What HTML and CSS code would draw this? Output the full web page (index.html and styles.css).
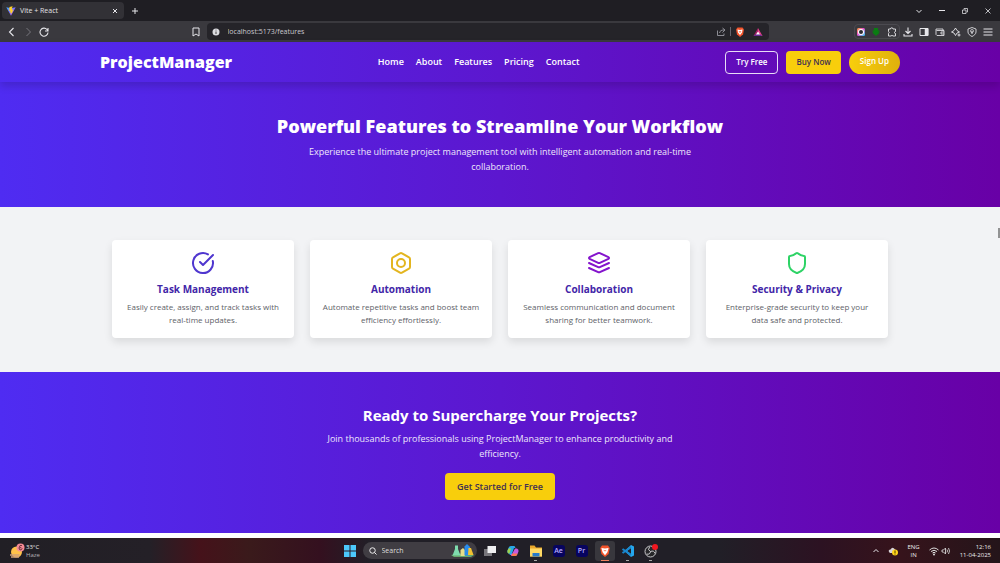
FILE: index.html
```html
<!DOCTYPE html>
<html lang="en">
<head>
<meta charset="utf-8">
<meta name="viewport" content="width=device-width, initial-scale=1">
<title>Vite + React</title>
<link rel="stylesheet" href="styles.css">
</head>
<body class="screen">
<div class="tabstrip">
  <div class="tab">
    <svg class="ico-10" viewBox="0 0 32 32"><defs><linearGradient id="vt" x1="0" y1="0" x2="1" y2="1"><stop offset="0" stop-color="#41b0ff"/><stop offset="1" stop-color="#bd34fe"/></linearGradient></defs><path d="M1 4l14 3 16-3-15 27z" fill="url(#vt)"/><path d="M21 1l-10 2-1 13 4-1-1 7 3-1-1 7 9-15-4 1 2-5-4 1z" fill="#ffd028"/></svg>
    <span class="tab-title">Vite + React</span>
    <button class="chrome-btn" aria-label="Close tab"><svg class="ico-6" viewBox="0 0 12 12"><path d="M2 2l8 8M10 2l-8 8" stroke-width="2"/></svg></button>
  </div>
  <button class="chrome-btn" aria-label="New tab"><svg class="ico-6" viewBox="0 0 12 12"><path d="M6 0v12M0 6h12" stroke-width="2"/></svg></button>
  <div class="window-controls">
    <button class="chrome-btn" aria-label="Search tabs"><svg class="ico-6" viewBox="0 0 12 12"><path d="M1 4l5 5 5-5" stroke-width="2"/></svg></button>
    <button class="chrome-btn" aria-label="Minimize"><svg class="ico-6" viewBox="0 0 12 12"><path d="M0 5h12" stroke-width="2"/></svg></button>
    <button class="chrome-btn" aria-label="Restore"><svg class="ico-6" viewBox="0 0 12 12"><path d="M1 4h7v7H1zM4 3V1h7v7H9" stroke-width="1.5"/></svg></button>
    <button class="chrome-btn" aria-label="Close window"><svg class="ico-6" viewBox="0 0 12 12"><path d="M1 1l10 10M11 1L1 11" stroke-width="1.6"/></svg></button>
  </div>
</div>
<div class="toolbar">
  <div class="nav-buttons">
    <button class="chrome-btn" aria-label="Back"><svg class="ico-10" viewBox="0 0 20 20"><path d="M13 2l-8 8 8 8" stroke-width="2.2"/></svg></button>
    <button class="chrome-btn dim" aria-label="Forward"><svg class="ico-10" viewBox="0 0 20 20"><path d="M7 2l8 8-8 8" stroke-width="2"/></svg></button>
    <button class="chrome-btn" aria-label="Reload"><svg class="ico-10" viewBox="0 0 20 20"><path d="M18 11a8 8 0 1 1-2-6l2 3M18 2v6h-6" stroke-width="2.2"/></svg></button>
  </div>
  <button class="chrome-btn bookmark" aria-label="Bookmark"><svg class="ico-10" viewBox="0 0 20 20"><path d="M4 2h12v16l-6-4-6 4z" stroke-width="2"/></svg></button>
  <div class="address">
    <svg class="ico-8" viewBox="0 0 16 16"><circle cx="8" cy="8" r="7" fill="#dcdce0"/><path d="M8 7v5" stroke="#444" stroke-width="2"/><circle cx="8" cy="4" r="1" fill="#444"/></svg>
    <input class="url" type="text" aria-label="Address" value="localhost:5173/features">
    <svg class="ico-10" viewBox="0 0 20 20"><path d="M3 7v10h13v-4M7 12c1-5 4-6 10-6M13 2l5 4-5 5" stroke="#9998a0" stroke-width="1.8"/></svg>
    <span class="divider"></span>
    <svg class="ico-10" viewBox="0 0 20 20"><path d="M5 1h10l3 4-2 10-6 5-6-5L2 5z" fill="#f2532a"/><path d="M5 5l5 1 5-1-1 6-4 5-4-5z" fill="#fff"/><path d="M7 8l3 1 3-1-3 4z" fill="#f2532a"/></svg>
    <svg class="ico-10 bat" viewBox="0 0 20 20"><path d="M10 2L1 18h9z" fill="#9e1f63"/><path d="M10 2l9 16h-9z" fill="#e8408c"/><path d="M1 18h18l-9-6z" fill="#662d91"/><path d="M10 9l4 6H6z" fill="#fff"/></svg>
  </div>
  <div class="toolbar-right">
    <div class="extensions">
      <svg class="ico-8" viewBox="0 0 16 16"><defs><linearGradient id="rb" x1="0" x2="1" y1="0" y2="1"><stop offset="0" stop-color="#ffa52e"/><stop offset=".45" stop-color="#e850d0"/><stop offset="1" stop-color="#26d7ef"/></linearGradient></defs><rect width="16" height="16" rx="3" fill="url(#rb)"/><circle cx="8" cy="8" r="6" fill="#fff"/><circle cx="8" cy="8" r="4" fill="#2c2b30"/></svg>
      <svg class="ico-8" viewBox="0 0 16 16"><path d="M4 0h8v5h4l-3 4h3l-8 7-8-7h3L0 5h4z" fill="#0a7d12"/></svg>
      <button class="chrome-btn" aria-label="Extensions"><svg class="ico-10" viewBox="0 0 20 20"><path d="M3 4h4a2.5 2.5 0 0 1 5 0h5v5a2 2 0 0 0 0 4v5h-5a2.500 2.500 0 0 0-4 0H3v-5a2.500 2.500 0 0 0 0-4z" stroke-width="1.8"/></svg></button>
    </div>
    <button class="chrome-btn" aria-label="Downloads"><svg class="ico-10" viewBox="0 0 20 20"><path d="M10 1v12M5 8l5 5 5-5M2 14v4h16v-4" stroke-width="2.2"/></svg></button>
    <button class="chrome-btn" aria-label="Sidebar"><svg class="ico-10" viewBox="0 0 20 20"><path d="M2 3h16v14H2z" stroke-width="2"/><path d="M12 3h6v14h-6z" fill="#e6e6ea"/></svg></button>
    <button class="chrome-btn" aria-label="Wallet"><svg class="ico-10" viewBox="0 0 20 20"><path d="M2 4h14v3M2 4v11l2 2h14V7H3M18 10h-6v4h6" stroke-width="1.700"/></svg></button>
    <button class="chrome-btn" aria-label="Assistant"><svg class="ico-10" viewBox="0 0 20 20"><path d="M9 2l3 5 5 3-5 2-3 5-3-5-5-2 5-3zM16 13v6M13 16h6" stroke-width="1.800"/></svg></button>
    <button class="chrome-btn" aria-label="VPN"><svg class="ico-10" viewBox="0 0 20 20"><path d="M10 1l8 3v6c0 4-4 7-8 9-4-2-8-5-8-9V4z" stroke-width="1.700"/><circle cx="10" cy="8" r="3" stroke="#d4d4d8" stroke-width="1.500"/><path d="M10 8v6" stroke-width="2"/></svg></button>
    <button class="chrome-btn" aria-label="Menu"><svg class="ico-10" viewBox="0 0 20 20"><path d="M1 4h18M1 10h18M1 16h18" stroke-width="2"/></svg></button>
  </div>
</div>

<div class="site">
  <header class="header">
    <div class="header-inner">
      <a class="brand" href="#">ProjectManager</a>
      <nav class="menu">
        <a href="#">Home</a><a href="#">About</a><a href="#">Features</a><a href="#">Pricing</a><a href="#">Contact</a>
      </nav>
      <div class="actions">
        <button class="btn btn-outline">Try Free</button>
        <button class="btn btn-yellow">Buy Now</button>
        <button class="btn btn-pill">Sign Up</button>
      </div>
    </div>
  </header>
  <main>
    <section class="hero">
      <h1 class="hero-title">Powerful Features to Streamline Your Workflow</h1>
      <p class="lead">Experience the ultimate project management tool with intelligent automation and real-time collaboration.</p>
    </section>
    <section class="features">
      <article class="card">
        <svg class="card-icon indigo" viewBox="0 0 24 24"><path d="M21.800 10A10 10 0 1 1 17 3.340"/><path d="M9 11l3 3L22 4"/></svg>
        <h2 class="card-title">Task Management</h2>
        <p class="card-text">Easily create, assign, and track tasks with real-time updates.</p>
      </article>
      <article class="card">
        <svg class="card-icon amber" viewBox="0 0 24 24"><path d="M21 16V8a2 2 0 0 0-1-1.730l-7-4a2 2 0 0 0-2 0l-7 4A2 2 0 0 0 3 8v8a2 2 0 0 0 1 1.730l7 4a2 2 0 0 0 2 0l7-4A2 2 0 0 0 21 16z"/><circle cx="12" cy="12" r="4"/></svg>
        <h2 class="card-title">Automation</h2>
        <p class="card-text">Automate repetitive tasks and boost team efficiency effortlessly.</p>
      </article>
      <article class="card">
        <svg class="card-icon purple" viewBox="0 0 24 24"><path d="M12.830 2.180a2 2 0 0 0-1.660 0L2.600 6.080a1 1 0 0 0 0 1.830l8.580 3.910a2 2 0 0 0 1.660 0l8.580-3.900a1 1 0 0 0 0-1.830z"/><path d="M2 12l9.170 4.160a2 2 0 0 0 1.660 0L22 12M2 17l9.170 4.160a2 2 0 0 0 1.660 0L22 17"/></svg>
        <h2 class="card-title">Collaboration</h2>
        <p class="card-text">Seamless communication and document sharing for better teamwork.</p>
      </article>
      <article class="card">
        <svg class="card-icon green" viewBox="0 0 24 24"><path d="M20 13c0 5-3.500 7.500-7.660 8.950a1 1 0 0 1-.67-.01C7.500 20.500 4 18 4 13V6a1 1 0 0 1 1-1c2 0 4.500-1.200 6.240-2.720a1.170 1.170 0 0 1 1.520 0C14.510 3.810 17 5 19 5a1 1 0 0 1 1 1z"/></svg>
        <h2 class="card-title">Security &amp; Privacy</h2>
        <p class="card-text">Enterprise-grade security to keep your data safe and protected.</p>
      </article>
    </section>
    <section class="cta">
      <h2 class="cta-title">Ready to Supercharge Your Projects?</h2>
      <p class="lead cta-lead">Join thousands of professionals using ProjectManager to enhance productivity and efficiency.</p>
      <button class="btn btn-cta">Get Started for Free</button>
    </section>
  </main>
  <svg class="cursor" viewBox="0 0 2 10"><path d="M1 0v10" stroke="#333" stroke-width="1"/></svg>
</div>

<footer class="taskbar">
  <div class="weather">
    <svg class="ico-16" viewBox="0 0 32 32"><circle cx="15" cy="18" r="11" fill="#ffc24a"/><path d="M2 24h19M4 28h16" stroke="#cfa079" stroke-width="3"/><circle cx="23" cy="9" r="8" fill="#f58a95"/><path d="M26 5h-4l-2 5 1 3 3 1 2-3-2-2-3 1" stroke="#4b1c28" stroke-width="1.500"/></svg>
    <div class="stack"><span>33°C</span><span class="muted">Haze</span></div>
  </div>
  <div class="apps">
    <button class="app" aria-label="Start"><svg class="ico-12" viewBox="0 0 24 24"><path d="M0 0h11v11H0zM13 0h11v11H13zM0 13h11v11H0zM13 13h11v11H13z" fill="#4cc8fb"/></svg></button>
    <label class="search">
      <svg class="ico-8" viewBox="0 0 16 16"><circle cx="7" cy="7" r="5.500" stroke="#eee" stroke-width="2"/><path d="M11 11l4 4" stroke="#eee" stroke-width="2"/></svg>
      <input class="search-input" type="search" placeholder="Search" aria-label="Search">
      <svg class="search-art" viewBox="0 0 46 26"><path d="M0 22q22-6 46 0l-6 4H6z" fill="#67a96b"/><path d="M8 3h6v7l5 13H3l5-13z" fill="#7fdcae"/><path d="M19 12l5-4 4 4v12h-9z" fill="#e6dd88"/><path d="M27 5l5-5 6 6v17H27z" fill="#298bea"/><path d="M35 8h5l5 14H34z" fill="#f2c232"/></svg>
    </label>
    <button class="app" aria-label="Task view"><svg class="ico-12" viewBox="0 0 24 24"><path d="M0 8h16v14H0z" fill="#77757b"/><path d="M7 2h17v14H7z" fill="#efeff1"/></svg></button>
    <button class="app" aria-label="Copilot"><svg class="ico-12" viewBox="0 0 24 24"><path d="M8 2h7l2 4h-3L9 20H6l-2-3H3q-3-2-2-6l2-5q1-4 5-4z" fill="#28a8e8"/><path d="M1 11l2-4h5L5 17H3q-3-2-2-6z" fill="#9ed14c"/><path d="M16 7h4q4 2 3 6l-2 5q-1 4-5 4H9l-2-4h3z" fill="#c45be0"/><path d="M11 17h10q-1 5-5 5H9z" fill="#fa784e"/></svg></button>
    <button class="app running" aria-label="File Explorer"><svg class="ico-14" viewBox="0 0 28 28"><path d="M2 3h9l3 4h12v18H2z" fill="#e9a82b"/><path d="M2 9h24v16H2z" fill="#ffd965"/><path d="M7 18h14v7H7z" fill="#2879c9"/></svg></button>
    <button class="app adobe" aria-label="After Effects">Ae</button>
    <button class="app adobe" aria-label="Premiere Pro">Pr</button>
    <button class="app running active" aria-label="Brave"><svg class="ico-12" viewBox="0 0 20 20"><path d="M5 1h10l3 4-2 10-6 5-6-5L2 5z" fill="#f2532a"/><path d="M4 5l6 1 6-1-2 7-4 5-4-5z" fill="#fff"/><path d="M7 8l3 1 3-1-3 3z" fill="#f2532a"/></svg></button>
    <button class="app running" aria-label="Visual Studio Code"><svg class="ico-14" viewBox="0 0 28 28"><path d="M20 2l6 3v18l-6 3L7 14z" fill="#25a7ee"/><path d="M20 8v12l-8-6z" fill="#202027"/><path d="M3 10l17 12M3 18L20 6" stroke="#1987cf" stroke-width="4"/></svg></button>
    <button class="app running" aria-label="OBS Studio"><svg class="ico-14" viewBox="0 0 28 28"><circle cx="13" cy="15" r="11" fill="#27272a" stroke="#c9c9cc" stroke-width="2"/><path d="M13 15q-7-3-2-9M13 15q7-3 9 4M13 15q-1 7-8 5" stroke="#c9c9cc" stroke-width="2"/><circle cx="22" cy="6" r="6" fill="#f01720"/></svg></button>
  </div>
  <div class="tray">
    <button class="chrome-btn" aria-label="Show hidden icons"><svg class="ico-6" viewBox="0 0 12 12"><path d="M1 8l5-5 5 5" stroke-width="2"/></svg></button>
    <svg class="ico-10" viewBox="0 0 20 20"><path d="M2 12q-2-5 3-5 4-7 9 0 4 1 3 7H4z" fill="#d7d2d6"/><circle cx="14" cy="13" r="6" fill="#ffd31c"/><path d="M14 9v5M14 15v2" stroke="#4a3800" stroke-width="2"/></svg>
    <div class="stack center"><span>ENG</span><span>IN</span></div>
    <div class="net">
      <svg class="ico-10" viewBox="0 0 20 20"><path d="M1 8q9-8 18 0M4 11q6-5 12 0M7 14q3-3 6 0" stroke="#ddd" stroke-width="2"/><circle cx="10" cy="17" r="2" fill="#ddd"/></svg>
      <svg class="ico-10" viewBox="0 0 20 20"><path d="M2 8h3l4-4v12l-4-4H2zM12 7q2 3 0 6M15 4q4 6 0 12" stroke="#ddd" stroke-width="1.700"/></svg>
    </div>
    <div class="stack end"><span>12:16</span><span>11-04-2025</span></div>
  </div>
</footer>
</body>
</html>
```
FILE: styles.css
```css
* { box-sizing: border-box; }
.screen {
  margin: 0;
  min-height: 100vh;
  display: flex;
  flex-direction: column;
  background: #fff;
  font-family: "Open Sans", "Noto Sans", sans-serif;
  font-size: 9px;
  line-height: 12px;
}
svg { display: block; flex: none; fill: none; }
button, input { font: inherit; }
a { color: inherit; text-decoration: none; }
h1, h2, p { margin: 0; }
.ico-6 { width: 6px; height: 6px; }
.ico-8 { width: 8px; height: 8px; }
.ico-10 { width: 10px; height: 10px; }
.ico-12 { width: 12px; height: 12px; }
.ico-14 { width: 14px; height: 14px; }
.ico-16 { width: 16px; height: 16px; }

/* Browser chrome */
.chrome-btn {
  display: flex;
  padding: 0;
  border: 0;
  background: none;
  stroke: #e6e6ea;
}
.dim { stroke: #77767d; }
.tabstrip {
  display: flex;
  align-items: center;
  gap: 8px;
  height: 21px;
  padding: 0 9px 0 2px;
  background: #1f1e23;
}
.tab {
  display: flex;
  align-items: center;
  gap: 4px;
  width: 122px;
  height: 17px;
  padding: 0 6px 0 4px;
  border-radius: 4px;
  background: #323136;
}
.tab-title { flex: 1; color: #e2e2e5; font-size: 7px; }
.window-controls { display: flex; gap: 17px; margin-left: auto; }
.toolbar {
  display: flex;
  align-items: center;
  height: 21px;
  padding: 0 7px;
  background: #3a393e;
}
.nav-buttons { display: flex; gap: 6px; flex: 9; }
.bookmark { margin-right: 6px; }
.address {
  display: flex;
  align-items: center;
  gap: 4px;
  width: 57%;
  height: 17px;
  padding: 0 6px 0 5px;
  border-radius: 4px;
  background: #252429;
}
.url {
  flex: 1;
  min-width: 0;
  margin-left: 4px;
  padding: 0;
  border: 0;
  background: none;
  color: #c9c8ce;
  font-size: 7px;
}
.divider { width: 1px; height: 9px; background: #66656c; }
.bat { margin-left: 4px; }
.toolbar-right { display: flex; align-items: center; justify-content: flex-end; gap: 6px; flex: 11; }
.extensions {
  display: flex;
  align-items: center;
  gap: 7px;
  height: 15px;
  padding: 0 2px;
  border: 1px solid #4b4a50;
  border-radius: 4px;
  margin-right: -3px;
}

/* Site */
.site { position: relative; flex: 1; }
.header, .hero, .cta { background: linear-gradient(to right, #4f2cf2, #5c17cf 50%, #6800a6); color: #fff; }
.header { position: relative; box-shadow: 0 4px 8px rgba(0, 0, 0, .16); }
.header-inner {
  display: flex;
  justify-content: space-between;
  align-items: center;
  max-width: 800px;
  min-height: 40px;
  margin: 0 auto;
}
.brand { font-size: 16px; line-height: 20px; font-weight: 800; }
.menu { display: flex; gap: 12px; font-weight: 600; }
.actions { display: flex; justify-content: flex-end; gap: 8px; }
.btn {
  height: 23px;
  padding: 0 10px;
  border: 0;
  border-radius: 4px;
  font-size: 8px;
  font-weight: 600;
  white-space: nowrap;
}
.btn-outline { border: 1px solid #e8dcf6; background: none; color: #fff; }
.btn-yellow, .btn-cta { background: #f8ce0c; color: #3f2f52; }
.btn-pill {
  padding: 0 11px 2px;
  border-radius: 12px;
  background: linear-gradient(to right, #f8ce0c, #dfb00c);
  color: #fff;
}
.hero { padding: 32px 20px 33px; text-align: center; }
.hero-title { font-size: 18px; line-height: 24px; font-weight: 800; }
.lead { max-width: 396px; margin: 6px auto 0; line-height: 15px; color: #eee6fb; }
.features {
  display: grid;
  grid-template-columns: repeat(4, 1fr);
  gap: 16px;
  padding: 33px calc(50% - 388px) 34px;
  background: #f2f3f5;
}
.card {
  display: flex;
  flex-direction: column;
  align-items: center;
  padding: 11px 12px 12px;
  border-radius: 4px;
  background: #fff;
  box-shadow: 0 4px 8px rgba(0, 0, 0, .1);
  text-align: center;
}
.card-icon { width: 24px; height: 24px; stroke-width: 2; stroke-linecap: round; stroke-linejoin: round; }
.indigo { stroke: #4f36cf; }
.amber { stroke: #e3b51f; }
.purple { stroke: #8414cc; }
.green { stroke: #2ed366; }
.card-title { margin-top: 6px; font-size: 10px; line-height: 16px; font-weight: 700; color: #4226a8; }
.card-text { margin-top: 3px; font-size: 8px; line-height: 13px; color: #5e6268; }
.cta { padding: 33px 20px; text-align: center; }
.cta-title { font-size: 15px; line-height: 20px; font-weight: 700; }
.cta-lead { max-width: 360px; }
.btn-cta { height: 27px; margin-top: 12px; padding: 0 12px; font-size: 9px; }
.cursor { position: absolute; top: 186px; right: 0; width: 2px; height: 10px; }

/* Desktop taskbar */
.taskbar {
  display: grid;
  grid-template-columns: 1fr auto 1fr;
  align-items: center;
  height: 25px;
  padding: 0 9px;
  background: linear-gradient(to right, #211f25, #242027 15%, #45121a 20%, #3a1a1b 25%, #34101f 32%, #211f27 37%, #211f27 72%, #2c1222 82%, #36131b 90%, #24151a);
  color: #eee;
  font-size: 6px;
  line-height: 8px;
}
.weather, .apps, .tray, .net { display: flex; align-items: center; }
.weather { gap: 1px; }
.stack { display: flex; flex-direction: column; }
.center { text-align: center; }
.end { text-align: right; }
.muted { color: #b5b3b8; }
.apps { gap: 3px; }
.app {
  position: relative;
  display: flex;
  align-items: center;
  justify-content: center;
  width: 20px;
  height: 20px;
  padding: 0;
  border: 0;
  border-radius: 3px;
  background: none;
}
.adobe { width: 12px; height: 12px; margin: 0 4px; background: #07045f; color: #b8adff; font-size: 7px; font-weight: 600; }
.active { background: #38373d; }
.running::after { content: ""; position: absolute; bottom: 0; width: 3px; height: 1px; background: #aaa; }
.active::after { width: 8px; background: #ef8260; }
.search {
  display: flex;
  align-items: center;
  gap: 5px;
  width: 114px;
  height: 17px;
  padding: 0 3px 0 6px;
  border-radius: 9px;
  background: #403d43;
}
.search-input { flex: 1; min-width: 0; padding: 0; border: 0; background: none; color: #ddd; font-size: 7px; }
.search-input::placeholder { color: #ddd; }
.search-art { width: 23px; height: 13px; }
.tray { justify-content: flex-end; gap: 9px; }
.net { gap: 2px; }
```
